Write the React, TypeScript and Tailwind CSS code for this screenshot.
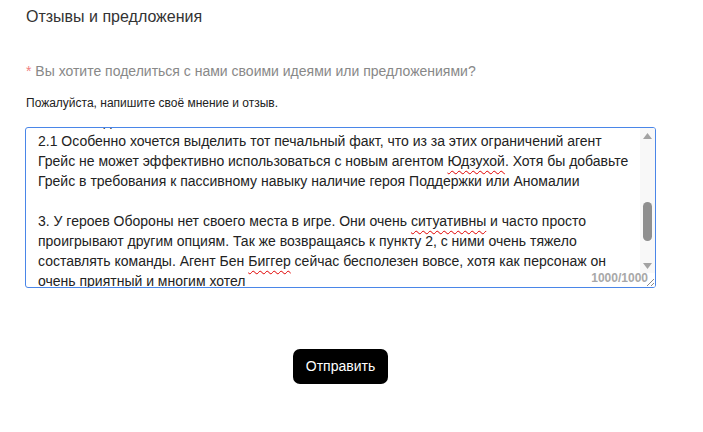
import React, { useEffect, useRef } from "react";

const before = [
  "Здравствуйте! Хотелось бы поделиться несколькими мыслями о текущем",
  "состоянии игры и о том, что, на мой взгляд, стоило бы улучшить.",
  "",
  "1. Система наборов команд сейчас слишком сильно ограничивает выбор.",
  "Очень многие агенты попросту не могут попасть в одну команду из-за",
  "требований пассивных навыков, и это сильно сужает разнообразие.",
  "",
  "2. Пассивные навыки завязаны на фракции и роли, из-за чего некоторые",
  "агенты становятся бесполезными без конкретных напарников. Хотелось бы,",
  "чтобы условия активации были более гибкими и понятными для игроков,",
  "особенно для новичков.",
];

const after = [
  "бы видеть его в команде. Было бы здорово пересмотреть их навыки и",
  "дать им больше пользы, чтобы у игроков был реальный выбор при сборе",
  "отряда. Спасибо за вашу работу!",
];

const W = ({ children }: { children: React.ReactNode }) => (
  <span className="underline decoration-wavy decoration-[#e00000] decoration-1 underline-offset-[4px]">
    {children}
  </span>
);

function Line({ children }: { children?: React.ReactNode }) {
  return <div className="h-[20px] whitespace-nowrap">{children}</div>;
}

export default function App() {
  const ref = useRef<HTMLDivElement>(null);
  useEffect(() => {
    if (ref.current) ref.current.scrollTop = 221;
  }, []);

  return (
    <div
      className="min-h-[432px] w-[703px] bg-white text-[#333]"
      style={{ fontFamily: '"Liberation Sans", Arial, sans-serif' }}
    >
      <div className="ml-[25px] w-[631px] pt-[7px]">
        <div className="pl-px text-[16px] leading-[20px] text-[#333]">Отзывы и предложения</div>
        <div className="mt-[35px] pl-px text-[14px] leading-[18px] text-[#888]">
          <span className="text-[#f08080]">*</span> Вы хотите поделиться с нами своими идеями или предложениями?
        </div>
        <div className="mt-[16px] pl-px text-[12px] leading-[14px] text-[#222]">
          Пожалуйста, напишите своё мнение и отзыв.
        </div>
        <div className="relative mt-[17px] flex h-[161px] overflow-hidden rounded-[3px] border border-[#4a86e8] bg-white">
          <div
            ref={ref}
            className="flex-1 overflow-hidden pb-[4px] pl-[12px] pt-[4px] text-[14px] leading-[20px] text-[#222]"
          >
            {before.map((l, i) => (
              <Line key={"b" + i}>{l}</Line>
            ))}
            <Line>2.1 Особенно хочется выделить тот печальный факт, что из за этих ограничений агент</Line>
            <Line>
              Грейс не может эффективно использоваться с новым агентом <W>Юдзухой</W>. Хотя бы добавьте
            </Line>
            <Line>Грейс в требования к пассивному навыку наличие героя Поддержки или Аномалии</Line>
            <Line />
            <Line>
              3. У героев Обороны нет своего места в игре. Они очень <W>ситуативны</W> и часто просто
            </Line>
            <Line>проигрывают другим опциям. Так же возвращаясь к пункту 2, с ними очень тяжело</Line>
            <Line>
              составлять команды. Агент Бен <W>Биггер</W> сейчас бесполезен вовсе, хотя как персонаж он
            </Line>
            <Line>очень приятный и многим хотел</Line>
            {after.map((l, i) => (
              <Line key={"a" + i}>{l}</Line>
            ))}
          </div>
          {/* scrollbar */}
          <div className="flex w-[15px] flex-col bg-[#f8f8f8]">
            <div className="flex h-[15px] items-center justify-center">
              <svg width="9" height="6" viewBox="0 0 9 6">
                <path d="M4.5 0 L9 6 L0 6 Z" fill="#a3a3a3" />
              </svg>
            </div>
            <div className="flex h-[115px] flex-col items-center">
              <div className="h-[59px]" />
              <div className="h-[39px] w-[9px] rounded-full bg-[#8f8f8f]" />
            </div>
            <div className="flex h-[15px] items-center justify-center">
              <svg width="9" height="6" viewBox="0 0 9 6">
                <path d="M0 0 L9 0 L4.5 6 Z" fill="#a3a3a3" />
              </svg>
            </div>
            <div className="flex flex-1 items-end justify-end bg-white">
              <svg width="10" height="10" viewBox="0 0 10 10">
                <path d="M9 2 L2 9 M9 6 L6 9" stroke="#8a8a8a" strokeWidth="1" />
              </svg>
            </div>
          </div>
          <div className="pointer-events-none absolute bottom-[2px] right-[7px] text-[12px] font-bold leading-[14px] text-[#a8a8a8]">
            1000/1000
          </div>
        </div>
        <div className="mt-[61px] flex justify-center">
          <button className="h-[35px] w-[95px] rounded-[7px] bg-black text-[14px] text-white">
            Отправить
          </button>
        </div>
      </div>
    </div>
  );
}
